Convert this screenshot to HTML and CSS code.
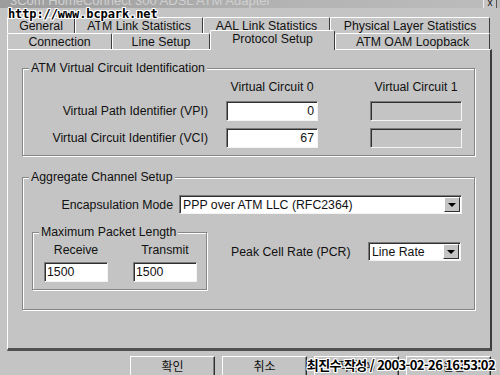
FILE: index.html
```html
<!DOCTYPE html>
<html lang="ko">
  <head>
    <meta charset="UTF-8" />
    <title>Protocol Setup</title>
    <link rel="stylesheet" href="styles.css">
  </head>
  <body>
    <div class="window">
      <div class="titlebar">
        <span class="title">3Com HomeConnect 300 ADSL ATM Adapter</span>
        <span class="close">x</span>
      </div>
      <div class="watermark">http://www.bcpark.net</div>

      <div class="tabs">
        <div class="tab-row">
          <div class="tab w-general">General</div>
          <div class="tab w-atm">ATM Link Statistics</div>
          <div class="tab w-aal">AAL Link Statistics</div>
          <div class="tab w-phy">Physical Layer Statistics</div>
        </div>
        <div class="tab-row">
          <div class="tab w-conn">Connection</div>
          <div class="tab w-line">Line Setup</div>
          <div class="tab w-proto active">Protocol Setup</div>
          <div class="tab w-oam">ATM OAM Loopback</div>
        </div>
      </div>

      <div class="panel">
        <fieldset class="group vc">
          <legend>ATM Virtual Circuit Identification</legend>
          <div class="vc-grid">
            <span></span>
            <span class="col-head">Virtual Circuit 0</span>
            <span class="col-head">Virtual Circuit 1</span>

            <label>Virtual Path Identifier (VPI)</label>
            <div class="field num">0</div>
            <div class="field off"></div>

            <label>Virtual Circuit Identifier (VCI)</label>
            <div class="field num">67</div>
            <div class="field off"></div>
          </div>
        </fieldset>

        <fieldset class="group agg">
          <legend>Aggregate Channel Setup</legend>
          <div class="encap-row">
            <label class="encap-label">Encapsulation Mode</label>
            <div class="select encap-select">
              <span>PPP over ATM LLC (RFC2364)</span>
              <span class="drop"></span>
            </div>
          </div>
          <div class="lower-row">
            <fieldset class="group packet">
              <legend>Maximum Packet Length</legend>
              <div class="packet-grid">
                <span>Receive</span>
                <span>Transmit</span>
                <div class="field">1500</div>
                <div class="field">1500</div>
              </div>
            </fieldset>
            <div class="pcr">
              <label class="pcr-label">Peak Cell Rate (PCR)</label>
              <div class="select pcr-select">
                <span>Line Rate</span>
                <span class="drop"></span>
              </div>
            </div>
          </div>
        </fieldset>
      </div>

      <div class="buttons">
        <div class="btn">확인</div>
        <div class="btn">취소</div>
        <div class="btn">적용(A)</div>
        <div class="btn">도움말</div>
      </div>
      <div class="stamp">최진수 작성 / 2003-02-26 16:53:02</div>
    </div>
  </body>
</html>
```

FILE: styles.css
```css
body {
  margin: 0;
  background-color: #c4c4c4;
  font-family: "Liberation Sans", Arial, "Noto Sans CJK KR", sans-serif;
  font-size: 12.3px;
  color: #111;
}
.window {
  position: relative;
  width: 500px;
  height: 375px;
  overflow: hidden;
  background-color: #c4c4c4;
}
.titlebar {
  height: 8px;
  overflow: hidden;
  background: linear-gradient(to right, #9c9c9c, #b4b4b4 60%, #bcbcbc);
  display: flex;
  justify-content: space-between;
}
.title {
  margin-top: -7px;
  margin-left: 10px;
  font-size: 13px;
  color: #d0d0d0;
}
.close {
  width: 12px;
  height: 9px;
  margin-right: 3px;
  margin-top: -2px;
  border: 1px solid #eee;
  border-right-color: #555;
  font-size: 10px;
  line-height: 8px;
  text-align: center;
  background-color: #c4c4c4;
}
.watermark {
  position: absolute;
  left: 8px;
  top: 7px;
  font-family: "DejaVu Sans Mono", monospace;
  font-weight: bold;
  font-size: 12px;
  letter-spacing: -0.1px;
  color: #000;
  text-shadow: 1px 0 #fff, -1px 0 #fff, 0 1px #fff, 0 -1px #fff,
    1px 1px #fff, -1px -1px #fff, 1px -1px #fff, -1px 1px #fff;
}

/* tabs */
.tabs {
  margin-top: 9px;
  padding-left: 7px;
}
.tab-row {
  display: flex;
  height: 16px;
}
.tab {
  box-sizing: border-box;
  height: 16px;
  border-top: 1px solid #fff;
  border-left: 1px solid #fff;
  border-right: 1px solid #3c3c3c;
  border-radius: 2px 2px 0 0;
  text-align: center;
  line-height: 16px;
  background-color: #c6c6c6;
}
.tab.active {
  position: relative;
  z-index: 1;
  height: 20px;
  margin-top: -3px;
  background-color: #c4c4c4;
  line-height: 16px;
}
.w-general { width: 68px; }
.w-atm { width: 128px; }
.w-aal { width: 127px; }
.w-phy { width: 160px; }
.w-conn { width: 105px; }
.w-line { width: 98px; }
.w-proto { width: 125px; }
.w-oam { width: 155px; }

/* panel */
.panel {
  box-sizing: border-box;
  margin-left: 7px;
  width: 485px;
  height: 302px;
  border-top: 1px solid #fff;
  border-left: 1px solid #fff;
  border-right: 2px solid #3c3c3c;
  border-bottom: 3px solid #505050;
  padding-left: 14px;
  padding-top: 11px;
}
.group {
  margin: 0;
  padding: 0;
  border: 1px solid #868686;
  box-shadow: 1px 1px 0 #fff, inset 1px 1px 0 #fff;
  min-width: 0;
}
.group legend {
  margin-left: 6px;
  padding: 0 2px;
  line-height: 14px;
  background-color: #c4c4c4;
}
.vc {
  width: 453px;
  box-sizing: border-box;
  padding-bottom: 7px;
}
.vc-grid {
  margin-top: 4px;
  display: grid;
  grid-template-columns: 203px 144px 92px;
  grid-template-rows: 15px 20px 20px;
  row-gap: 7px;
  align-items: center;
}
.vc-grid label {
  text-align: right;
  padding-right: 18px;
}
.col-head {
  width: 92px;
  text-align: center;
}
.field {
  box-sizing: border-box;
  width: 92px;
  height: 20px;
  background-color: #fff;
  border-top: 1px solid #7c7c7c;
  border-left: 1px solid #7c7c7c;
  border-right: 1px solid #f4f4f4;
  border-bottom: 1px solid #f4f4f4;
  box-shadow: inset 1px 1px 0 #303030;
  line-height: 18px;
  padding: 0 3px;
}
.field.num {
  text-align: right;
}
.field.off {
  background-color: #c4c4c4;
}

.agg {
  width: 453px;
  box-sizing: border-box;
  margin-top: 14px;
  padding-bottom: 19px;
}
.encap-row {
  display: flex;
  align-items: center;
  margin-top: 11px;
}
.encap-label {
  width: 150px;
  text-align: right;
  margin-right: 6px;
}
.select {
  box-sizing: border-box;
  height: 19px;
  display: flex;
  justify-content: space-between;
  align-items: center;
  background-color: #fff;
  border-top: 1px solid #7c7c7c;
  border-left: 1px solid #7c7c7c;
  border-right: 1px solid #f4f4f4;
  border-bottom: 1px solid #f4f4f4;
  box-shadow: inset 1px 1px 0 #303030;
  padding: 1px 1px 1px 3px;
}
.encap-select {
  width: 283px;
}
.drop {
  box-sizing: border-box;
  width: 16px;
  height: 15px;
  background-color: #c4c4c4;
  border-top: 1px solid #fff;
  border-left: 1px solid #fff;
  border-right: 1px solid #303030;
  border-bottom: 1px solid #303030;
  display: flex;
  align-items: center;
  justify-content: center;
}
.drop::after {
  content: "";
  border-left: 4px solid transparent;
  border-right: 4px solid transparent;
  border-top: 4px solid #000;
}
.lower-row {
  display: flex;
  align-items: flex-start;
  margin-top: 11px;
}
.packet {
  width: 175px;
  box-sizing: border-box;
  margin-left: 9px;
  padding-bottom: 7px;
}
.packet-grid {
  margin-top: 4px;
  padding-left: 11px;
  display: grid;
  grid-template-columns: 64px 64px;
  grid-template-rows: 14px 20px;
  column-gap: 25px;
  row-gap: 5px;
  text-align: center;
}
.packet-grid .field {
  width: 64px;
  text-align: left;
  padding: 0 2px;
}
.pcr {
  display: flex;
  align-items: center;
  margin-left: 24px;
  margin-top: 17px;
}
.pcr-label {
  width: 118px;
  margin-right: 19px;
  white-space: nowrap;
}
.pcr-select {
  width: 93px;
}

/* bottom buttons */
.buttons {
  display: flex;
  justify-content: flex-end;
  gap: 7px;
  padding-right: 9px;
  margin-top: 5px;
  font-family: "Noto Sans CJK KR", sans-serif;
}
.btn {
  box-sizing: border-box;
  width: 85px;
  height: 24px;
  border-top: 1px solid #fff;
  border-left: 1px solid #fff;
  border-right: 1px solid #303030;
  border-bottom: 1px solid #303030;
  box-shadow: inset -1px -1px 0 #808080;
  text-align: center;
  font-size: 12px;
  line-height: 18px;
}
.stamp {
  position: absolute;
  right: 5px;
  bottom: 1px;
  font-family: "Noto Sans CJK KR", sans-serif;
  font-weight: bold;
  font-size: 13px;
  letter-spacing: -0.6px;
  color: #000;
  text-shadow: 1px 0 #fff, -1px 0 #fff, 0 1px #fff, 0 -1px #fff,
    1px 1px #fff, -1px -1px #fff, 1px -1px #fff, -1px 1px #fff;
}
```
